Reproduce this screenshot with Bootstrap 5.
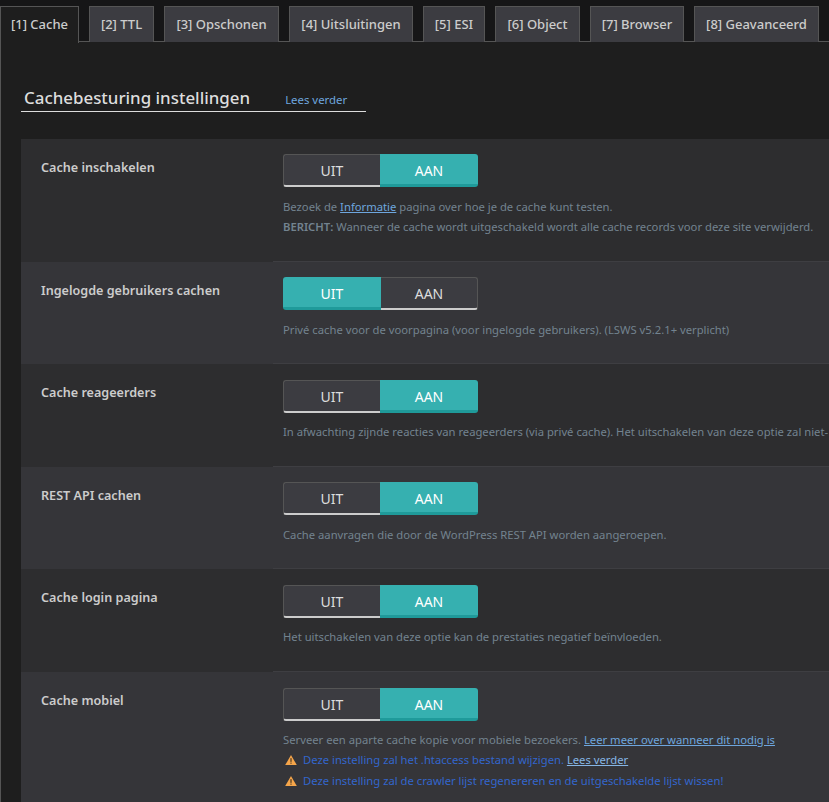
<!DOCTYPE html>
<html lang="nl">
<head>
<meta charset="utf-8">
<title>Cache</title>
<link href="https://cdn.jsdelivr.net/npm/bootstrap@5.3.0/dist/css/bootstrap.min.css" rel="stylesheet">
<style>
html,body{height:802px;overflow:hidden}
body{background:#161617;color:#ccc;font-family:"Noto Sans","Open Sans",sans-serif;font-size:13px}
.tabbar{height:42px;padding-top:6px;gap:10px;border-bottom:1px solid #555;flex-wrap:nowrap}
.tabitem{display:block;height:36px;border:1px solid #555;border-bottom:0;background:#3c3c41;color:#ccc;font-size:13px;font-weight:500;text-align:center;line-height:35px;white-space:nowrap;text-decoration:none;flex:none}
.tabitem.on{background:#1e1e1e;height:37px;margin-bottom:-1px}
.tab1{width:79px}.tab2{width:65px}.tab3{width:115px}.tab4{width:124px}.tab5{width:62px}.tab6{width:85px}.tab7{width:94px}.tab8{width:125px}
.panel{border-left:1px solid #555;background:#1e1e1e;padding:0 0 0 20px;height:760px;overflow:hidden}
.headline{width:345px;height:30px;margin-top:40px;border-bottom:1px solid #ddd;padding-left:3px;margin-bottom:26.6px}
.headline h3{font-size:16.9px;font-weight:500;color:#ddd;margin:0;line-height:31px;font-family:"Noto Sans",sans-serif}
.headline a{font-size:11.4px;color:#6ea6de;text-decoration:none;margin-left:35px}
.setrow{display:flex;width:808px;overflow:hidden;height:102.6px}
.setrow.first{height:123px}
.setrow.last{height:140px}
.setrow.odd{background:#2d2d2f}
.setrow.even{background:#353539}
.setlabel{width:252px;flex:none;padding:19px 0 0 20px;font-weight:600;font-size:12.6px;color:#ccc;line-height:19px}
.setbody{flex:1;padding:15.6px 0 0 10px;min-width:0;border-bottom:1px solid #3e3e42}
.flip{display:flex;width:195px;height:33px;margin-bottom:9.4px}
.flip span{text-align:center;font-size:14px;color:#ddd}
.flip .off{width:97px;background:#3c3c41;border:1px solid #555;border-bottom:2px solid #ccc;line-height:31px}
.flip .act{width:98px;background:#36b0b0;border-bottom:3px solid #1f9a9a;color:#fff;line-height:33px}
.flip .off:first-child{border-radius:3px 0 0 3px;border-right:0}
.flip .off:last-child{border-radius:0 3px 3px 0;border-left:0}
.flip .act:first-child{border-radius:3px 0 0 3px}
.flip .act:last-child{border-radius:0 3px 3px 0}
.note{font-size:11.25px;line-height:20.3px;color:#73838f;white-space:nowrap;margin:0}
.note a{color:#6ea6de}
.note b{font-weight:600}
.warnline{color:#3366cc}
.warnline a{color:#85b5e5}
.warnline svg{width:12px;height:12px;vertical-align:-2px;margin:0 6px 0 2px}
</style>
</head>
<body>
<div class="d-flex tabbar">
  <a class="tabitem tab1 on" href="#">[1] Cache</a>
  <a class="tabitem tab2" href="#">[2] TTL</a>
  <a class="tabitem tab3" href="#">[3] Opschonen</a>
  <a class="tabitem tab4" href="#">[4] Uitsluitingen</a>
  <a class="tabitem tab5" href="#">[5] ESI</a>
  <a class="tabitem tab6" href="#">[6] Object</a>
  <a class="tabitem tab7" href="#">[7] Browser</a>
  <a class="tabitem tab8" href="#">[8] Geavanceerd</a>
</div>
<div class="panel">
  <div class="headline d-flex align-items-baseline"><h3>Cachebesturing instellingen</h3><a href="#">Lees verder</a></div>

  <div class="setrow first odd">
    <div class="setlabel">Cache inschakelen</div>
    <div class="setbody">
      <div class="flip"><span class="off">UIT</span><span class="act">AAN</span></div>
      <p class="note">Bezoek de <a href="#">Informatie</a> pagina over hoe je de cache kunt testen.</p>
      <p class="note"><b>BERICHT:</b> Wanneer de cache wordt uitgeschakeld wordt alle cache records voor deze site verwijderd.</p>
    </div>
  </div>
  <div class="setrow even">
    <div class="setlabel">Ingelogde gebruikers cachen</div>
    <div class="setbody">
      <div class="flip"><span class="act">UIT</span><span class="off">AAN</span></div>
      <p class="note">Privé cache voor de voorpagina (voor ingelogde gebruikers). (LSWS v5.2.1+ verplicht)</p>
    </div>
  </div>
  <div class="setrow odd">
    <div class="setlabel">Cache reageerders</div>
    <div class="setbody">
      <div class="flip"><span class="off">UIT</span><span class="act">AAN</span></div>
      <p class="note">In afwachting zijnde reacties van reageerders (via privé cache). Het uitschakelen van deze optie zal niet-</p>
    </div>
  </div>
  <div class="setrow even">
    <div class="setlabel">REST API cachen</div>
    <div class="setbody">
      <div class="flip"><span class="off">UIT</span><span class="act">AAN</span></div>
      <p class="note">Cache aanvragen die door de WordPress REST API worden aangeroepen.</p>
    </div>
  </div>
  <div class="setrow odd">
    <div class="setlabel">Cache login pagina</div>
    <div class="setbody">
      <div class="flip"><span class="off">UIT</span><span class="act">AAN</span></div>
      <p class="note">Het uitschakelen van deze optie kan de prestaties negatief beïnvloeden.</p>
    </div>
  </div>
  <div class="setrow last even">
    <div class="setlabel">Cache mobiel</div>
    <div class="setbody">
      <div class="flip"><span class="off">UIT</span><span class="act">AAN</span></div>
      <p class="note">Serveer een aparte cache kopie voor mobiele bezoekers. <a href="#">Leer meer over wanneer dit nodig is</a></p>
      <p class="note warnline"><svg viewBox="0 0 13 12"><path d="M6.5 0.5 L12.8 11.5 H0.2 Z" fill="#f5a54a"/><rect x="5.9" y="4" width="1.2" height="4" fill="#3a3020"/><rect x="5.9" y="8.8" width="1.2" height="1.2" fill="#3a3020"/></svg>Deze instelling zal het .htaccess bestand wijzigen. <a href="#">Lees verder</a></p>
      <p class="note warnline"><svg viewBox="0 0 13 12"><path d="M6.5 0.5 L12.8 11.5 H0.2 Z" fill="#f5a54a"/><rect x="5.9" y="4" width="1.2" height="4" fill="#3a3020"/><rect x="5.9" y="8.8" width="1.2" height="1.2" fill="#3a3020"/></svg>Deze instelling zal de crawler lijst regenereren en de uitgeschakelde lijst wissen!</p>
    </div>
  </div>
</div>
<script src="https://cdn.jsdelivr.net/npm/bootstrap@5.3.0/dist/js/bootstrap.bundle.min.js"></script>
</body>
</html>
